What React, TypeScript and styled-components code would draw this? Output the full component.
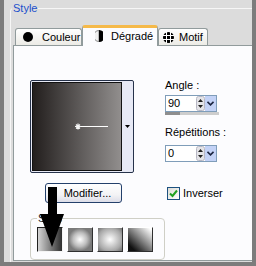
import React from 'react';
import styled, { createGlobalStyle } from 'styled-components';

const Global = createGlobalStyle`
  html, body { margin: 0; padding: 0; background: #7c7c7c; }
  body { font-family: "Liberation Sans", Arial, sans-serif; font-size: 11px; color: #000; }
`;

const Frame = styled.div`
  width: 256px;
  height: 266px;
  box-sizing: border-box;
  padding: 0 4px 4px 4px;
  background: #7c7c7c;
  display: flex;
`;

const Dialog = styled.div`
  flex: 1;
  background: #dcdcdc;
  overflow: hidden;
  padding: 8px 0 0 6px;
`;

const GroupBox = styled.div`
  position: relative;
  width: 262px;
  height: 290px;
  box-sizing: border-box;
  border: 1px solid #f6f6f6;
  border-radius: 3px;
  padding: 16px 0 0 2px;
`;

const Legend = styled.span<{ $bg: string; $color: string; $left: number }>`
  position: absolute;
  top: -7px;
  left: ${(p) => p.$left}px;
  padding: 0 1px;
  line-height: 12px;
  background: ${(p) => p.$bg};
  color: ${(p) => p.$color};
`;

const TabBar = styled.div`
  display: flex;
  align-items: flex-end;
  height: 20px;
  padding-left: 2px;
`;

const Tab = styled.div<{ $active?: boolean; $w: number; $pl: number; $gap: number }>`
  position: relative;
  z-index: ${(p) => (p.$active ? 2 : 1)};
  box-sizing: border-box;
  width: ${(p) => p.$w}px;
  height: ${(p) => (p.$active ? 21 : 17)}px;
  margin-bottom: ${(p) => (p.$active ? -1 : 0)}px;
  display: flex;
  align-items: center;
  gap: ${(p) => p.$gap}px;
  padding-left: ${(p) => p.$pl}px;
  padding-bottom: ${(p) => (p.$active ? 3 : 0)}px;
  border: 1px solid #919b9c;
  border-bottom: none;
  border-top: ${(p) => (p.$active ? '3px solid #f5b949' : '1px solid #919b9c')};
  border-radius: 3px 3px 0 0;
  background: ${(p) => (p.$active ? '#fcfcfe' : 'linear-gradient(#ffffff, #ecebe6)')};
  white-space: nowrap;
`;

const Panel = styled.div`
  position: relative;
  box-sizing: border-box;
  width: 260px;
  height: 216px;
  border: 1px solid #919b9c;
  background: #fcfcfe;
  padding: 34px 0 0 16px;
  display: flex;
  flex-direction: column;
`;

const TopRow = styled.div`
  display: flex;
  gap: 31px;
`;

const Picker = styled.div`
  box-sizing: border-box;
  width: 104px;
  height: 93px;
  border: 1px solid #26324a;
  border-radius: 2px;
  background: #e7e9f5;
  padding: 1px;
  display: flex;
`;

const Preview = styled.div`
  width: 90px;
  height: 89px;
`;

const DropStrip = styled.div`
  flex: 1;
  display: flex;
  align-items: center;
  justify-content: center;
  padding-left: 1px;
`;

const Params = styled.div`
  display: flex;
  flex-direction: column;
`;

const Label = styled.div<{ $mt: number }>`
  line-height: 11px;
  margin-top: ${(p) => p.$mt}px;
`;

const Spin = styled.div<{ $mt: number }>`
  box-sizing: border-box;
  width: 52px;
  height: 17px;
  margin-top: ${(p) => p.$mt}px;
  border: 1px solid #7f9db9;
  background: #fff;
  display: flex;
  align-items: center;
`;

const SpinValue = styled.span`
  flex: 1;
  padding-left: 2px;
  line-height: 13px;
`;

const SpinArrows = styled.span`
  width: 9px;
  height: 15px;
  display: flex;
`;

const SpinDrop = styled.span`
  width: 11px;
  height: 15px;
  background: #c3d2f6;
  display: flex;
  align-items: center;
  justify-content: center;
`;

const Slider = styled.div`
  width: 54px;
  height: 3px;
  background: #cdcdcd;
  display: flex;
`;

const SliderFill = styled.div`
  width: 15px;
  background: #8e8e8e;
`;

const ActionRow = styled.div`
  display: flex;
  align-items: center;
  margin-top: 10px;
`;

const Button = styled.div`
  box-sizing: border-box;
  width: 77px;
  height: 20px;
  margin-left: 15px;
  border: 1px solid #24406b;
  border-radius: 3px;
  background: linear-gradient(#ffffff 0%, #f3f3f5 60%, #dcdde8 100%);
  display: flex;
  align-items: center;
  justify-content: center;
  padding-left: 8px;
`;

const Check = styled.label`
  display: flex;
  align-items: center;
  gap: 3px;
  margin-left: 45px;
`;

const Box = styled.span`
  box-sizing: border-box;
  width: 13px;
  height: 13px;
  border: 1px solid #1c5180;
  background: linear-gradient(135deg, #dcdcd6, #ffffff);
  display: flex;
  align-items: center;
  justify-content: center;
`;

const Presets = styled.div`
  position: relative;
  box-sizing: border-box;
  width: 135px;
  height: 43px;
  margin-top: 15px;
  border: 1px solid #cfcfc6;
  border-radius: 4px;
  padding: 8px 0 0 6px;
  display: flex;
  gap: 4px;
`;

const Swatch = styled.div<{ $bg: string; $sel?: boolean }>`
  box-sizing: border-box;
  width: 26px;
  height: 25px;
  border: 1px solid;
  border-color: ${(p) => (p.$sel ? '#202020 #f4f4f4 #f4f4f4 #202020' : '#ffffff #303030 #303030 #ffffff')};
  background: ${(p) => p.$bg};
`;

const ArrowMark = styled.svg`
  position: absolute;
  left: 26px;
  top: 141px;
  z-index: 5;
`;

const Dot = styled.span`
  width: 10px;
  height: 10px;
  border-radius: 50%;
  background: #000;
`;

export default function App() {
  return (
    <>
      <Global />
      <Frame>
        <Dialog>
          <GroupBox>
            <Legend $bg="#dcdcdc" $color="#2150cc" $left={1}>Style</Legend>
            <TabBar>
              <Tab $w={67} $pl={7} $gap={9}>
                <Dot />
                <span>Couleur</span>
              </Tab>
              <Tab $active $w={76} $pl={12} $gap={8}>
                <svg width="8" height="12" viewBox="0 0 8 12">
                  <path d="M4 0.5 A5.5 5.5 0 0 0 4 11.5 Z" fill="#f0f0f0" stroke="#888" strokeWidth="1" />
                  <path d="M4 0 A6 6 0 0 1 4 12 Z" fill="#000" />
                </svg>
                <span>Dégradé</span>
              </Tab>
              <Tab $w={50} $pl={4} $gap={5}>
                <svg width="11" height="11" viewBox="0 0 11 11">
                  <circle cx="5.5" cy="5.5" r="5.5" fill="#000" />
                  <path d="M3.5 0V11M7.5 0V11M0 3.5H11M0 7.5H11" stroke="#fff" strokeWidth="1" />
                </svg>
                <span>Motif</span>
              </Tab>
            </TabBar>
            <Panel>
              <TopRow>
                <Picker>
                  <Preview>
                    <svg width="90" height="89" viewBox="0 0 90 89">
                      <defs>
                        <linearGradient id="g" x1="0" x2="1" y1="0" y2="0">
                          <stop offset="0" stopColor="#221e1d" />
                          <stop offset="1" stopColor="#928f8e" />
                        </linearGradient>
                      </defs>
                      <rect x="0.5" y="0.5" width="89" height="88" fill="url(#g)" stroke="#111" strokeWidth="1" />
                      <path d="M48 44.5H76" stroke="#fff" strokeWidth="1" />
                      <path d="M43 44.5H49M46 41.5V47.5M44 42.5L48 46.5M48 42.5L44 46.5" stroke="#f4f4f4" strokeWidth="1.2" />
                    </svg>
                  </Preview>
                  <DropStrip>
                    <svg width="5" height="3" viewBox="0 0 5 3">
                      <path d="M0 0H5L2.5 3Z" fill="#000" />
                    </svg>
                  </DropStrip>
                </Picker>
                <Params>
                  <Label $mt={0}>Angle :</Label>
                  <Spin $mt={4}>
                    <SpinValue>90</SpinValue>
                    <SpinArrows>
                      <svg width="9" height="15" viewBox="0 0 9 15">
                        <rect x="0.5" y="0.5" width="8" height="14" rx="2" fill="#e4e4e8" stroke="#b8b8c4" />
                        <path d="M2 6L4.5 3L7 6Z M2 9L4.5 12L7 9Z" fill="#222" />
                      </svg>
                    </SpinArrows>
                    <SpinDrop>
                      <svg width="7" height="5" viewBox="0 0 7 5">
                        <path d="M0.5 0.8L3.5 3.8L6.5 0.8" fill="none" stroke="#1b2440" strokeWidth="1.6" />
                      </svg>
                    </SpinDrop>
                  </Spin>
                  <Slider>
                    <SliderFill />
                  </Slider>
                  <Label $mt={12}>Répétitions :</Label>
                  <Spin $mt={7}>
                    <SpinValue>0</SpinValue>
                    <SpinArrows>
                      <svg width="9" height="15" viewBox="0 0 9 15">
                        <rect x="0.5" y="0.5" width="8" height="14" rx="2" fill="#e4e4e8" stroke="#b8b8c4" />
                        <path d="M2 6L4.5 3L7 6Z M2 9L4.5 12L7 9Z" fill="#222" />
                      </svg>
                    </SpinArrows>
                    <SpinDrop>
                      <svg width="7" height="5" viewBox="0 0 7 5">
                        <path d="M0.5 0.8L3.5 3.8L6.5 0.8" fill="none" stroke="#1b2440" strokeWidth="1.6" />
                      </svg>
                    </SpinDrop>
                  </Spin>
                </Params>
              </TopRow>
              <ActionRow>
                <Button>Modifier...</Button>
                <Check>
                  <Box>
                    <svg width="9" height="9" viewBox="0 0 9 9">
                      <path d="M1 4.5L3.5 7L8 1.5" fill="none" stroke="#21a121" strokeWidth="2" />
                    </svg>
                  </Box>
                  <span>Inverser</span>
                </Check>
              </ActionRow>
              <Presets>
                <Legend $bg="#fcfcfe" $color="#222" $left={6}>Style</Legend>
                <Swatch $sel $bg="linear-gradient(to right, #d4d4d4, #2e2e2e)" />
                <Swatch $bg="radial-gradient(circle closest-side, #ffffff 0%, #bdbdbd 60%, #7a7a7a 100%)" />
                <Swatch $bg="radial-gradient(closest-corner, #ffffff 0%, #a8a8a8 70%, #6e6e6e 100%)" />
                <Swatch $bg="linear-gradient(to top right, #111111 15%, #8a8a8a 55%, #ffffff 95%)" />
              </Presets>
              <ArrowMark width="24" height="60" viewBox="0 0 24 60">
                <path d="M8 0H17V27H24L12 60L0 27H8Z" fill="#000" />
              </ArrowMark>
            </Panel>
          </GroupBox>
        </Dialog>
      </Frame>
    </>
  );
}
